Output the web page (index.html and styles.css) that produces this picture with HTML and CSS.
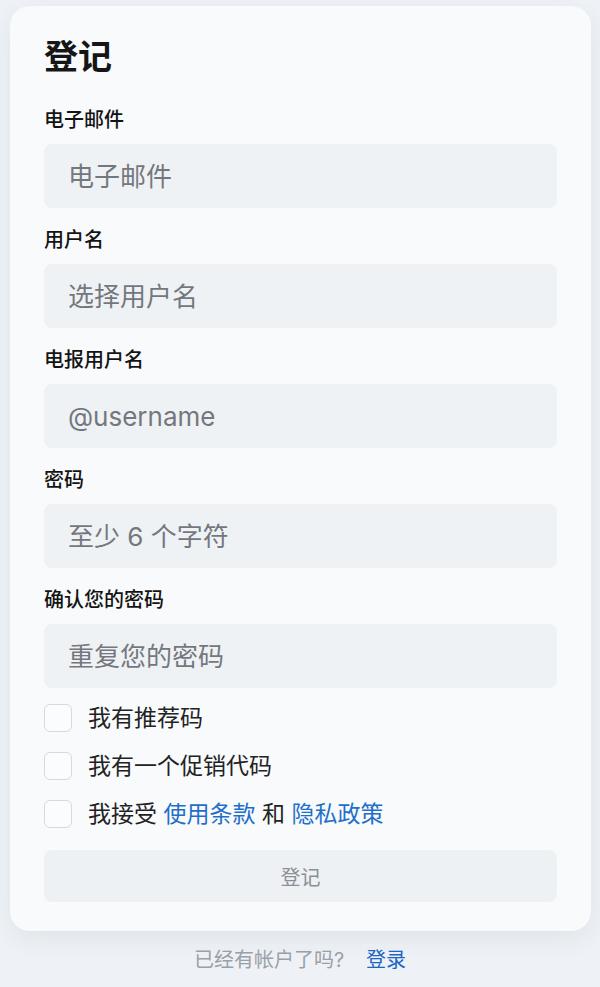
FILE: index.html
```html
<!DOCTYPE html>
<html lang="zh">
<head>
<meta charset="utf-8">
<link rel="stylesheet" href="styles.css">
</head>
<body>
<div class="card">
  <h1 class="title">登记</h1>
  <div class="field">
    <label class="label">电子邮件</label>
    <input class="input" placeholder="电子邮件">
  </div>
  <div class="field">
    <label class="label">用户名</label>
    <input class="input" placeholder="选择用户名">
  </div>
  <div class="field">
    <label class="label">电报用户名</label>
    <input class="input" placeholder="@username">
  </div>
  <div class="field">
    <label class="label">密码</label>
    <input class="input" placeholder="至少 6 个字符">
  </div>
  <div class="field field-last">
    <label class="label">确认您的密码</label>
    <input class="input" placeholder="重复您的密码">
  </div>
  <div class="checks">
    <div class="check"><span class="box"></span><span>我有推荐码</span></div>
    <div class="check"><span class="box"></span><span>我有一个促销代码</span></div>
    <div class="check"><span class="box"></span><span>我接受 <a class="link">使用条款</a> 和 <a class="link">隐私政策</a></span></div>
  </div>
  <button class="submit">登记</button>
</div>
<p class="footer">已经有帐户了吗? <a class="footer-link">登录</a></p>
</body>
</html>
```
FILE: styles.css
```css
* { box-sizing: border-box; }
html, body { margin: 0; padding: 0; }
body {
  background: #eef2f6;
  font-family: Inter, "Noto Sans CJK SC", sans-serif;
  color: #111;
}
.card {
  margin: 6px 9px 0 10px;
  background: #f8fafc;
  border-radius: 20px;
  padding: 29px 34px 29px 34px;
  box-shadow: 0 8px 24px rgba(30, 50, 80, 0.07);
}
.title {
  margin: 0 0 29px;
  font-size: 34px;
  line-height: 44px;
  font-weight: 700;
  color: #161616;
}
.field {
  display: flex;
  flex-direction: column;
  margin-bottom: 20px;
}
.field-last { margin-bottom: 16px; }
.label {
  font-size: 20px;
  line-height: 24px;
  font-weight: 500;
  margin-bottom: 12px;
  color: #141414;
}
.input {
  height: 64px;
  border: none;
  border-radius: 8px;
  background: #eff2f5;
  padding: 0 24px;
  font-family: Inter, "Noto Sans CJK SC", sans-serif;
  font-size: 26px;
  color: #222;
  outline: none;
}
.input::placeholder { color: #74787e; }
.checks {
  display: flex;
  flex-direction: column;
  gap: 20px;
}
.check {
  display: flex;
  align-items: center;
  gap: 16px;
  font-size: 23px;
  line-height: 28px;
  color: #222;
}
.box {
  width: 28px;
  height: 28px;
  border: 1.5px solid #d6d9de;
  border-radius: 6px;
  background: #fbfcfd;
  flex: none;
}
.link { color: #1f6fca; text-decoration: none; }
.submit {
  display: block;
  width: 100%;
  margin-top: 22px;
  height: 52px;
  border: none;
  border-radius: 8px;
  background: #eef1f4;
  color: #8b8f95;
  font-family: Inter, "Noto Sans CJK SC", sans-serif;
  font-size: 20px;
}
.footer {
  margin: 15px 0 0;
  text-align: center;
  font-size: 20px;
  line-height: 28px;
  color: #9aa0a8;
}
.footer-link { color: #1a66c2; margin-left: 16px; text-decoration: none; }
```
